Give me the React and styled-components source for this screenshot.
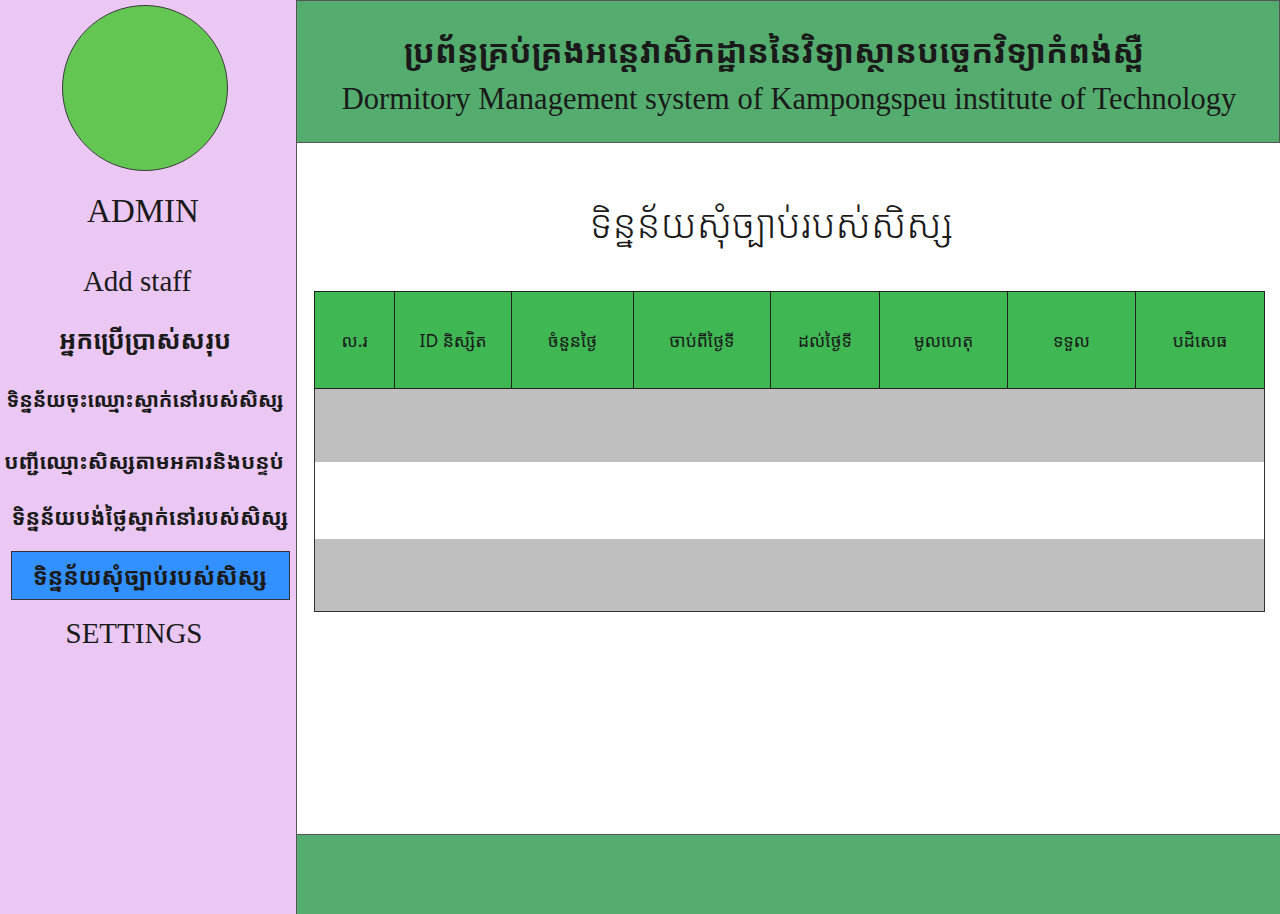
import React from 'react';
import styled, { createGlobalStyle } from 'styled-components';

const GlobalStyle = createGlobalStyle`
  html, body { margin: 0; padding: 0; }
  body {
    width: 1280px;
    height: 914px;
    overflow: hidden;
    font-family: "Liberation Serif", "Noto Serif Khmer", "Noto Sans Khmer", "Khmer OS", serif;
    color: #1a1a1a;
  }
`;

const khmer = `"Noto Sans Khmer", "Khmer OS", "Noto Serif Khmer", "Liberation Sans", sans-serif`;

const Page = styled.div`
  display: grid;
  grid-template-columns: 297px 1fr;
  height: 914px;
`;

const Sidebar = styled.aside`
  background: #ebc8f3;
  border-right: 1px solid #555;
  display: flex;
  flex-direction: column;
  align-items: center;
  padding-top: 5px;
`;

const Avatar = styled.div`
  width: 164px;
  height: 164px;
  border-radius: 50%;
  background: #63c653;
  border: 1px solid #3a3a3a;
  margin-left: -7px;
`;

const Admin = styled.div`
  font-family: "Liberation Serif", serif;
  font-size: 33px;
  margin-top: 22px;
  margin-left: -10px;
`;

const NavList = styled.nav`
  display: flex;
  flex-direction: column;
  align-items: center;
  width: 100%;
  margin-top: 22px;
`;

const NavItem = styled.div`
  font-family: ${p => (p.$latin ? `"Liberation Serif", serif` : khmer)};
  font-size: ${p => (p.$latin ? '29px' : `${p.$size || 20}px`)};
  font-weight: ${p => (p.$latin ? 400 : 700)};
  height: ${p => p.$h || 60}px;
  display: flex;
  align-items: center;
  justify-content: center;
  box-sizing: border-box;
  white-space: nowrap;
  margin-left: ${p => p.$shift || 0}px;
  ${p =>
    p.$active &&
    `
    width: 279px;
    height: 49px;
    margin: 11px 0 7px 4px;
    background: #3390ff;
    border: 1px solid #333;
  `}
`;

const Main = styled.main`
  display: flex;
  flex-direction: column;
`;

const Header = styled.header`
  height: 143px;
  background: #54ad6f;
  border: 1px solid #555;
  border-left: none;
  box-sizing: border-box;
  display: flex;
  flex-direction: column;
  align-items: center;
  padding: 27px 0 0 2px;
`;

const HeaderKh = styled.h1`
  margin: 0;
  padding-right: 30px;
  font-family: ${khmer};
  font-weight: 700;
  font-size: 32.5px;
  line-height: 46px;
`;

const HeaderEn = styled.div`
  margin-top: 2px;
  font-family: "Liberation Serif", serif;
  font-size: 30.5px;
  line-height: 46px;
`;

const Content = styled.section`
  flex: 1;
  background: #fff;
  padding: 40px 15px 0 17px;
`;

const Title = styled.h2`
  margin: 0 36px 0 0;
  text-align: center;
  font-family: ${khmer};
  font-weight: 300;
  font-size: 39px;
  line-height: 80px;
`;

const Table = styled.table`
  width: 951px;
  margin-top: 28px;
  border-collapse: collapse;
  border: 1px solid #333;
  table-layout: fixed;
`;

const Th = styled.th`
  height: 96px;
  background: #3fb854;
  border: 1px solid #222;
  font-family: ${khmer};
  font-weight: 400;
  font-size: 17.5px;
  padding: 0;
  color: #1a1a1a;
`;

const Row = styled.tr`
  height: ${p => p.$h}px;
  background: ${p => (p.$gray ? '#bfbfbf' : '#fff')};
`;

const Footer = styled.footer`
  height: 79px;
  background: #54ad6f;
  border-top: 1px solid #555;
`;

const columns = [
  { label: 'ល.រ', w: 80 },
  { label: 'ID និស្សិត', w: 117 },
  { label: 'ចំនួនថ្ងៃ', w: 122 },
  { label: 'ចាប់ពីថ្ងៃទី', w: 137 },
  { label: 'ដល់ថ្ងៃទី', w: 109 },
  { label: 'មូលហេតុ', w: 128 },
  { label: 'ទទួល', w: 128 },
  { label: 'បដិសេធ', w: 129 },
];

const rows = [
  { h: 73, gray: true },
  { h: 77, gray: false },
  { h: 73, gray: true },
];

export default function App() {
  return (
    <>
      <GlobalStyle />
      <Page>
        <Sidebar>
          <Avatar />
          <Admin>ADMIN</Admin>
          <NavList>
            <NavItem $latin $h={58} $shift={-22}>Add staff</NavItem>
            <NavItem $h={58} $size={25} $shift={-6}>អ្នកប្រើប្រាស់សរុប</NavItem>
            <NavItem $h={62} $shift={-6}>ទិន្នន័យចុះឈ្មោះស្នាក់នៅរបស់សិស្ស</NavItem>
            <NavItem $h={62} $size={21} $shift={-8}>បញ្ជីឈ្មោះសិស្សតាមអគារនិងបន្ទប់</NavItem>
            <NavItem $h={48} $size={21.5} $shift={4}>ទិន្នន័យបង់ថ្លៃស្នាក់នៅរបស់សិស្ស</NavItem>
            <NavItem $active $size={23}>ទិន្នន័យសុំច្បាប់របស់សិស្ស</NavItem>
            <NavItem $latin $h={52} $shift={-28}>SETTINGS</NavItem>
          </NavList>
        </Sidebar>
        <Main>
          <Header>
            <HeaderKh>ប្រព័ន្ធគ្រប់គ្រងអន្តេវាសិកដ្ឋាននៃវិទ្យាស្ថានបច្ចេកវិទ្យាកំពង់ស្ពឺ</HeaderKh>
            <HeaderEn>Dormitory Management system of Kampongspeu institute of Technology</HeaderEn>
          </Header>
          <Content>
            <Title>ទិន្នន័យសុំច្បាប់របស់សិស្ស</Title>
            <Table>
              <colgroup>
                {columns.map(c => (
                  <col key={c.label} style={{ width: c.w }} />
                ))}
              </colgroup>
              <thead>
                <tr>
                  {columns.map(c => (
                    <Th key={c.label}>{c.label}</Th>
                  ))}
                </tr>
              </thead>
              <tbody>
                {rows.map((r, i) => (
                  <Row key={i} $h={r.h} $gray={r.gray}>
                    <td colSpan={columns.length} />
                  </Row>
                ))}
              </tbody>
            </Table>
          </Content>
          <Footer />
        </Main>
      </Page>
    </>
  );
}
